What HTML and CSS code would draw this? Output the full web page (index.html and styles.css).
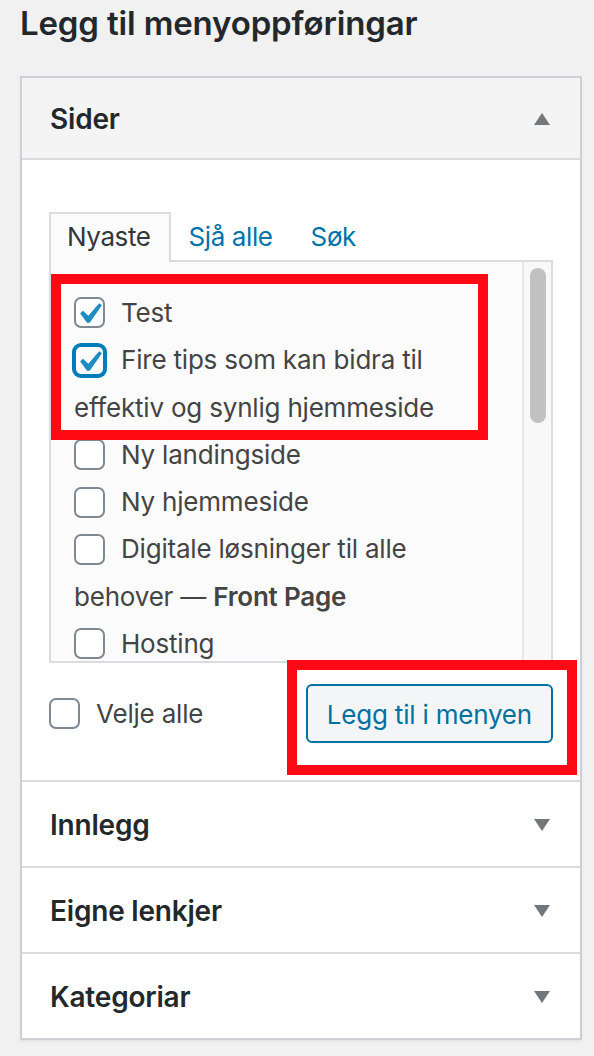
FILE: index.html
```html
<!DOCTYPE html>
<html lang="nn">
<head>
<meta charset="utf-8">
<title>Legg til menyoppføringar</title>
<link rel="stylesheet" href="styles.css">
</head>
<body>
<div class="page">
  <h2 class="title">Legg til menyoppføringar</h2>
  <div class="accordion">
    <div class="section open">
      <div class="section-title">
        <span>Sider</span>
        <svg class="arrow" width="16" height="12" viewBox="0 0 16 12"><polygon points="8,0 16,12 0,12"/></svg>
      </div>
      <div class="section-content">
        <div class="tabs">
          <span class="tab active">Nyaste</span><span class="tab">Sjå alle</span><span class="tab">Søk</span>
        </div>
        <div class="tabs-panel">
          <ul class="checklist">
            <li><span class="cb checked"><svg viewBox="0 0 20 20"><path d="M14.83 4.89l1.34.94-5.81 8.38H9.02L5.78 9.67l1.34-1.25 2.57 2.4z"/></svg></span>Test</li>
            <li><span class="cb checked focus"><svg viewBox="0 0 20 20"><path d="M14.83 4.89l1.34.94-5.81 8.38H9.02L5.78 9.67l1.34-1.25 2.57 2.4z"/></svg></span>Fire tips som kan bidra til effektiv og synlig hjemmeside</li>
            <li><span class="cb"></span>Ny landingside</li>
            <li><span class="cb"></span>Ny hjemmeside</li>
            <li><span class="cb"></span>Digitale løsninger til alle behover — <strong>Front Page</strong></li>
            <li><span class="cb"></span>Hosting</li>
          </ul>
          <div class="scrollbar"><div class="thumb"></div></div>
        </div>
        <div class="actions">
          <label class="select-all"><span class="cb"></span>Velje alle</label>
          <button class="button" type="button">Legg til i menyen</button>
        </div>
      </div>
    </div>
    <div class="section">
      <div class="section-title closed">
        <span>Innlegg</span>
        <svg class="arrow" width="16" height="12" viewBox="0 0 16 12"><polygon points="0,0 16,0 8,12"/></svg>
      </div>
    </div>
    <div class="section">
      <div class="section-title closed">
        <span>Eigne lenkjer</span>
        <svg class="arrow" width="16" height="12" viewBox="0 0 16 12"><polygon points="0,0 16,0 8,12"/></svg>
      </div>
    </div>
    <div class="section last">
      <div class="section-title closed">
        <span>Kategoriar</span>
        <svg class="arrow" width="16" height="12" viewBox="0 0 16 12"><polygon points="0,0 16,0 8,12"/></svg>
      </div>
    </div>
  </div>
  <div class="mark mark-list"></div>
  <div class="mark mark-button"></div>
</div>
</body>
</html>
```

FILE: styles.css
```css
* { box-sizing: border-box; }

html, body {
  margin: 0;
  padding: 0;
  background: #f1f1f1;
}

body {
  font-family: Inter, "Noto Sans", "Liberation Sans", sans-serif;
  color: #444;
  width: 594px;
  height: 1056px;
  overflow: hidden;
}

.page {
  position: relative;
  padding: 0 12px 0 20px;
}

.title {
  margin: 0;
  height: 46px;
  line-height: 46px;
  font-size: 33px;
  font-weight: 600;
  color: #23282d;
  letter-spacing: -0.15px;
}

.accordion {
  margin-top: 30px;
  width: 562px;
  border: 2px solid #ccd0d4;
  background: #fff;
  box-shadow: 0 2px 2px rgba(0, 0, 0, 0.05);
}

.section {
  border-bottom: 2px solid #dcdcde;
}

.section.last {
  border-bottom: none;
}

.section-title {
  display: flex;
  align-items: center;
  justify-content: space-between;
  height: 82px;
  padding: 2px 30px 0 28px;
  background: #f4f4f4;
  border-bottom: 2px solid #dcdcde;
  font-size: 28px;
  font-weight: 600;
  color: #23282d;
  letter-spacing: -0.2px;
}

.section-title.closed {
  height: 84px;
  background: #fff;
  border-bottom: none;
}

.arrow {
  display: block;
  fill: #72777c;
}

.section-content {
  padding: 52px 27px 37px 27px;
}

.tabs {
  display: flex;
  align-items: flex-end;
  height: 50px;
  position: relative;
  z-index: 1;
}

.tab {
  display: block;
  height: 48px;
  line-height: 46px;
  padding: 0 20px 0 18px;
  font-size: 26px;
  color: #0073aa;
  letter-spacing: -0.4px;
}

.tab.active {
  height: 50px;
  padding: 0 18px 0 16px;
  border: 2px solid #dcdcde;
  border-bottom: none;
  background: #fbfbfb;
  color: #32373c;
}

.tabs-panel {
  display: flex;
  height: 403px;
  margin-top: -2px;
  border: 2px solid #dcdcde;
  background: #fbfbfb;
  overflow: hidden;
}

.checklist {
  flex: 1;
  margin: 0;
  padding: 27px 40px 0 23px;
  list-style: none;
  overflow: hidden;
}

.checklist li {
  font-size: 26px;
  line-height: 47.3px;
  color: #444;
  letter-spacing: -0.2px;
}

.checklist strong {
  font-weight: 600;
}

.cb {
  position: relative;
  display: inline-block;
  width: 31px;
  height: 31px;
  margin: -4px 16px 0 0;
  vertical-align: middle;
  border: 2px solid #7e8993;
  border-radius: 7px;
  background: #fff;
}

.cb.focus {
  border-color: #007cba;
  box-shadow: 0 0 0 2px #007cba;
}

.cb svg {
  position: absolute;
  left: -8px;
  top: -6px;
  width: 42px;
  height: 42px;
  fill: #1e8cbe;
}

.scrollbar {
  width: 29px;
  flex: none;
  border-left: 2px solid #e6e6e6;
  background: #f8f8f8;
  padding: 6px 0 0 6px;
}

.thumb {
  width: 16px;
  height: 155px;
  border-radius: 8px;
  background: #c1c1c1;
}

.actions {
  display: flex;
  align-items: center;
  justify-content: space-between;
  margin-top: 21px;
}

.select-all {
  display: flex;
  align-items: center;
  font-size: 26px;
  color: #444;
  letter-spacing: -0.2px;
}

.select-all .cb {
  margin: 0 16px 0 0;
}

.button {
  display: block;
  height: 59px;
  padding: 2px 19px 0;
  border: 2px solid #0071a1;
  border-radius: 6px;
  background: #f3f5f6;
  color: #0071a1;
  font-family: inherit;
  font-size: 26px;
  letter-spacing: -0.2px;
}

.mark {
  position: absolute;
  border: 10px solid #ff0a14;
}

.mark-list {
  left: 51px;
  top: 274px;
  width: 437px;
  height: 166px;
}

.mark-button {
  left: 287px;
  top: 660px;
  width: 290px;
  height: 115px;
}
```
